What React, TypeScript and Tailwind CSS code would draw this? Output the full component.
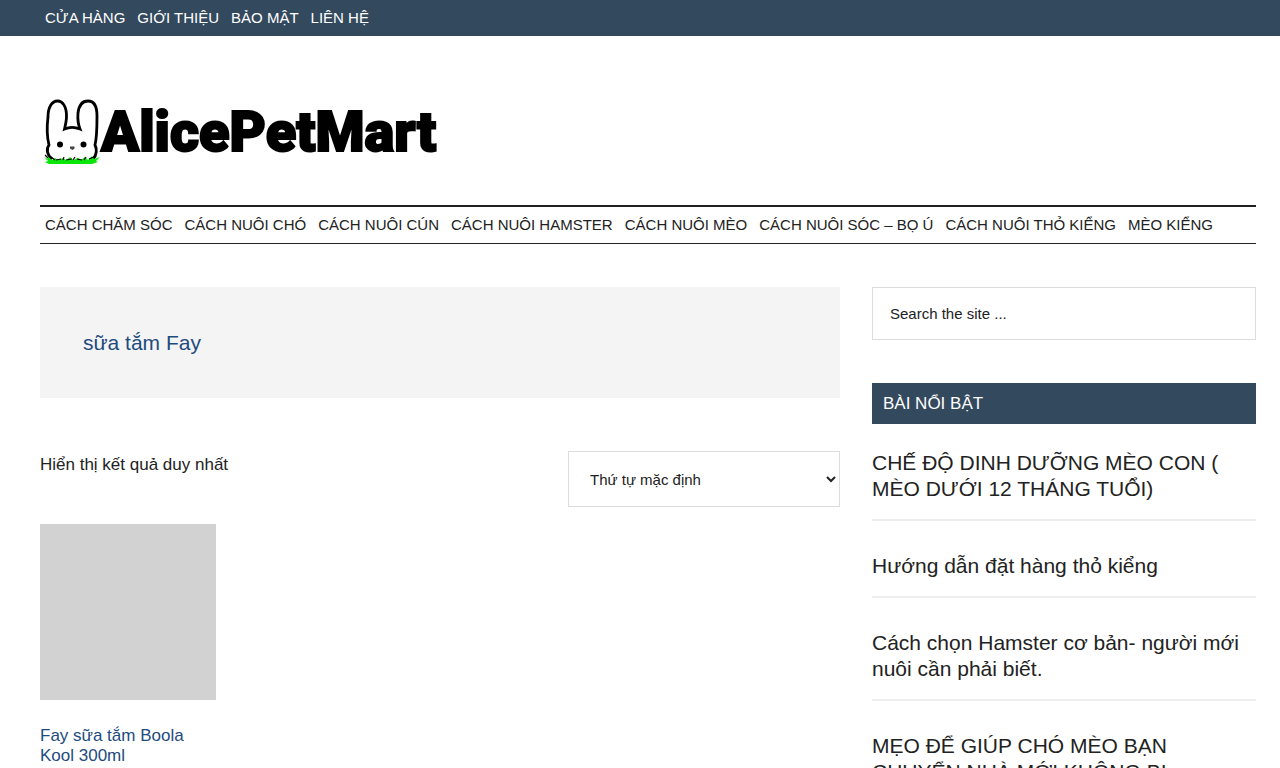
import React, { useState } from "react";

const topLinks = ["CỬA HÀNG", "GIỚI THIỆU", "BẢO MẬT", "LIÊN HỆ"];

const categoryLinks = [
  "CÁCH CHĂM SÓC",
  "CÁCH NUÔI CHÓ",
  "CÁCH NUÔI CÚN",
  "CÁCH NUÔI HAMSTER",
  "CÁCH NUÔI MÈO",
  "CÁCH NUÔI SÓC – BỌ Ú",
  "CÁCH NUÔI THỎ KIỂNG",
  "MÈO KIỂNG",
];

const featuredPosts = [
  "CHẾ ĐỘ DINH DƯỠNG MÈO CON ( MÈO DƯỚI 12 THÁNG TUỔI)",
  "Hướng dẫn đặt hàng thỏ kiểng",
  "Cách chọn Hamster cơ bản- người mới nuôi cần phải biết.",
  "MẸO ĐỂ GIÚP CHÓ MÈO BẠN CHUYỂN NHÀ MỚI KHÔNG BỊ",
];

const RabbitLogo = () => (
  <svg
    viewBox="0 0 56 68"
    className="h-[68px] w-14 shrink-0"
    fill="none"
    aria-hidden="true"
  >
    <path
      d="M8 61C3 57 2 51 5 47C3 39 3 27 4 19C4 9 8 3 13.500 3C19 3 22.500 9 22.500 18C22.500 23 21.500 27 20.500 31C25 29 31 29 36 31C34 26 33.500 21 34 15C35 7 39 3 44 3C50 3 53 9 53 18C53 28 53 39 51 47C53 51 53 57 49 61"
      stroke="#000"
      strokeWidth="2.8"
      fill="#fff"
    />
    <circle cx="16" cy="46.500" r="3" fill="#000" />
    <circle cx="39.500" cy="46.500" r="3" fill="#000" />
    <path d="M26 48.500h4.500v2l-2 1.500l-2.500-1.500z" fill="#444" />
    <path
      d="M0 59l4 2l-1-3l5 4l3-2l3 2l5-2l3 2l4-3l3 3l5-2l3 2l4-3l3 3l4-4l2 3l6-2l-4 4l2 1l-6 2H5l-4-2l3-1z"
      fill="#0ae60a"
    />
    <path
      d="M1 57l3 3M7 59l4 3M12 62l5-1M19 62l1-3M22 62l6-1M29 62l2-3M33 61l5 1M40 62l2-3M45 61l5-2"
      stroke="#000"
      strokeWidth="1.2"
    />
  </svg>
);

const PostItem = ({ title }: { title: string }) => {
  return (
    <article className="mb-8 border-b-2 border-[#eeeeee] pb-[17px]">
      <h2 className="text-[21px] leading-[26px]">
        <a href="#">{title}</a>
      </h2>
    </article>
  );
};

const App = () => {
  const [sort, setSort] = useState("menu_order");

  return (
    <div className="bg-white font-['Liberation_Sans',sans-serif] text-[#222222]">
      <nav className="bg-[#33495d] pr-6 pl-10 text-white">
        <ul className="flex gap-3 px-[5px] py-2 text-[15px] leading-5">
          {topLinks.map((link) => (
            <li key={link}>
              <a href="#">{link}</a>
            </li>
          ))}
        </ul>
      </nav>

      <div className="pr-6 pl-10">
        <header className="flex h-[169px] items-center pt-[22px]">
          <a href="#" className="flex items-center gap-px pl-1">
            <RabbitLogo />
            <span className="font-[Roboto,sans-serif] text-[56px] leading-[68px] font-black text-black [-webkit-text-stroke:2px_#000]">
              AlicePetMart
            </span>
          </a>
        </header>

        <nav className="border-t-2 border-b border-[#222222]">
          <ul className="flex flex-wrap gap-x-3 px-[5px] py-2 text-[15px] leading-5">
            {categoryLinks.map((link) => (
              <li key={link}>
                <a href="#">{link}</a>
              </li>
            ))}
          </ul>
        </nav>

        <div className="flex gap-8 pt-[43px]">
          <main className="min-w-0 flex-[25]">
            <div className="bg-[#f4f4f4] px-[43px] py-[42px]">
              <h1 className="text-[21px] leading-[27px] text-[#1e4b7e]">
                sữa tắm Fay
              </h1>
            </div>

            <div className="mt-[53px] flex items-start justify-between">
              <p className="text-[17px] leading-7">
                Hiển thị kết quả duy nhất
              </p>
              <select
                aria-label="Thứ tự"
                value={sort}
                onChange={(e) => setSort(e.target.value)}
                className="h-14 w-[272px] border border-[#dddddd] bg-white pl-[17px] text-[15px]"
              >
                <option value="menu_order">Thứ tự mặc định</option>
                <option value="popularity">Thứ tự theo mức độ phổ biến</option>
                <option value="date">Mới nhất</option>
              </select>
            </div>

            <ul className="mt-[17px] grid grid-cols-4 gap-8">
              <li>
                <a href="#" className="block text-[#1e4b7e]">
                  <div className="aspect-square bg-[#d2d2d2]" />
                  <h2 className="mt-[26px] text-[17px] leading-5">
                    Fay sữa tắm Boola Kool 300ml
                  </h2>
                </a>
              </li>
            </ul>
          </main>

          <aside className="min-w-0 flex-[12]">
            <input
              type="search"
              aria-label="Search the site"
              placeholder="Search the site ..."
              className="block h-[53px] w-full border border-[#dddddd] px-[17px] text-[15px] placeholder:text-[#222222]"
            />
            <h3 className="mt-[43px] mb-[26px] bg-[#33495d] px-[11px] py-2 text-[17px] leading-[25px] text-white">
              BÀI NỔI BẬT
            </h3>
            {featuredPosts.map((post) => (
              <PostItem key={post} title={post} />
            ))}
          </aside>
        </div>
      </div>
    </div>
  );
};

export default App;
